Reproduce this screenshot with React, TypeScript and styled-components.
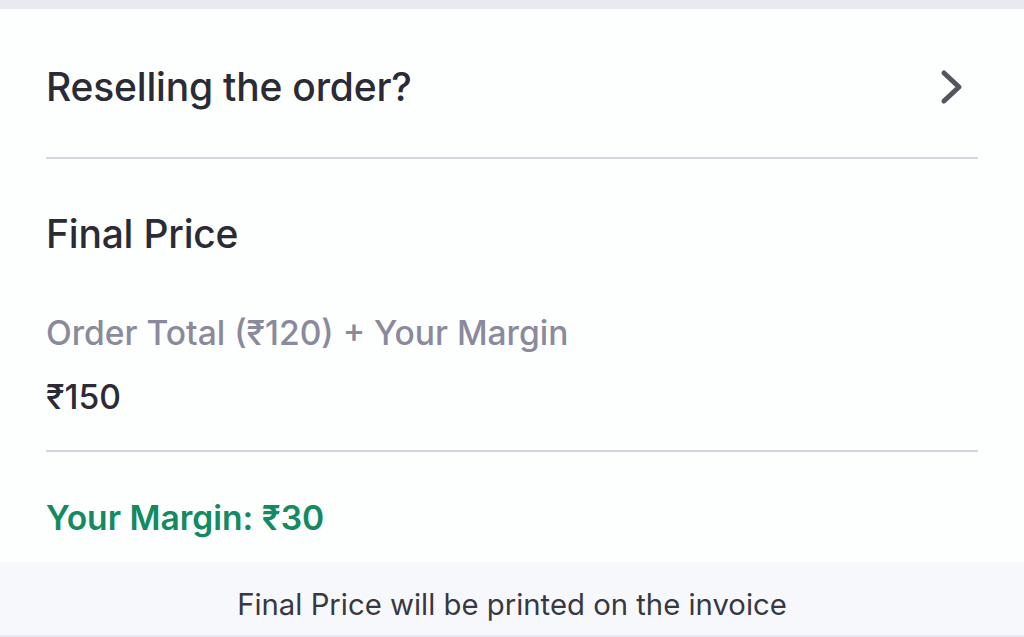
import React from 'react'
import styled, { createGlobalStyle } from 'styled-components'

const GlobalStyle = createGlobalStyle`
  html, body {
    margin: 0;
    padding: 0;
    background: #ffffff;
    font-family: Inter, "Noto Sans", sans-serif;
  }
`

const Page = styled.div`
  display: flex;
  flex-direction: column;
  width: 1024px;
  height: 637px;
  overflow: hidden;
  background: #fdfefe;
`

const TopStrip = styled.div`
  height: 9px;
  flex-shrink: 0;
  background: #e9e9f2;
`

const Card = styled.div`
  flex: 1;
  padding: 0 46px;
  background: #fdfefe;
`

const ResellRow = styled.div`
  display: flex;
  align-items: center;
  justify-content: space-between;
  box-sizing: border-box;
  height: 148px;
  padding: 8px 14px 0 0;
  cursor: pointer;
`

const Heading = styled.h2<{ $top?: number }>`
  margin: ${(p) => p.$top ?? 0}px 0 0;
  font-size: 39px;
  line-height: 48px;
  font-weight: 500;
  color: #2b2b36;
  letter-spacing: -0.2px;
`

const Divider = styled.hr<{ $top?: number }>`
  margin: ${(p) => p.$top ?? 0}px 0 0;
  border: 0;
  height: 2px;
  background: #d4d4dc;
`

const Line = styled.div<{ $top: number; $tone: 'muted' | 'dark' | 'green' }>`
  margin-top: ${(p) => p.$top}px;
  font-size: 33.6px;
  line-height: 42px;
  font-weight: ${(p) => (p.$tone === 'green' ? 600 : 500)};
  color: ${(p) =>
    p.$tone === 'muted' ? '#8a8a9c' : p.$tone === 'green' ? '#138a62' : '#2b2b36'};
`

const Footer = styled.div`
  display: flex;
  align-items: center;
  justify-content: center;
  box-sizing: border-box;
  height: 75px;
  padding-top: 12px;
  flex-shrink: 0;
  background: #f7f8fc;
  border-bottom: 2px solid #e9e9f2;
  font-size: 29.3px;
  color: #383842;
`

const Chevron = () => (
  <svg width="26" height="36" viewBox="0 0 26 36" fill="none">
    <polyline
      points="6,4 21,18 6,32"
      stroke="#55555e"
      strokeWidth="5"
      strokeLinecap="round"
      strokeLinejoin="round"
    />
  </svg>
)

export default function App() {
  return (
    <>
      <GlobalStyle />
      <Page>
        <TopStrip />
        <Card>
          <ResellRow>
            <Heading>Reselling the order?</Heading>
            <Chevron />
          </ResellRow>
          <Divider />
          <Heading $top={51}>Final Price</Heading>
          <Line $top={54} $tone="muted">
            Order Total (₹120) + Your Margin
          </Line>
          <Line $top={22} $tone="dark">
            ₹150
          </Line>
          <Divider $top={32} />
          <Line $top={45} $tone="green">
            Your Margin: ₹30
          </Line>
        </Card>
        <Footer>Final Price will be printed on the invoice</Footer>
      </Page>
    </>
  )
}
